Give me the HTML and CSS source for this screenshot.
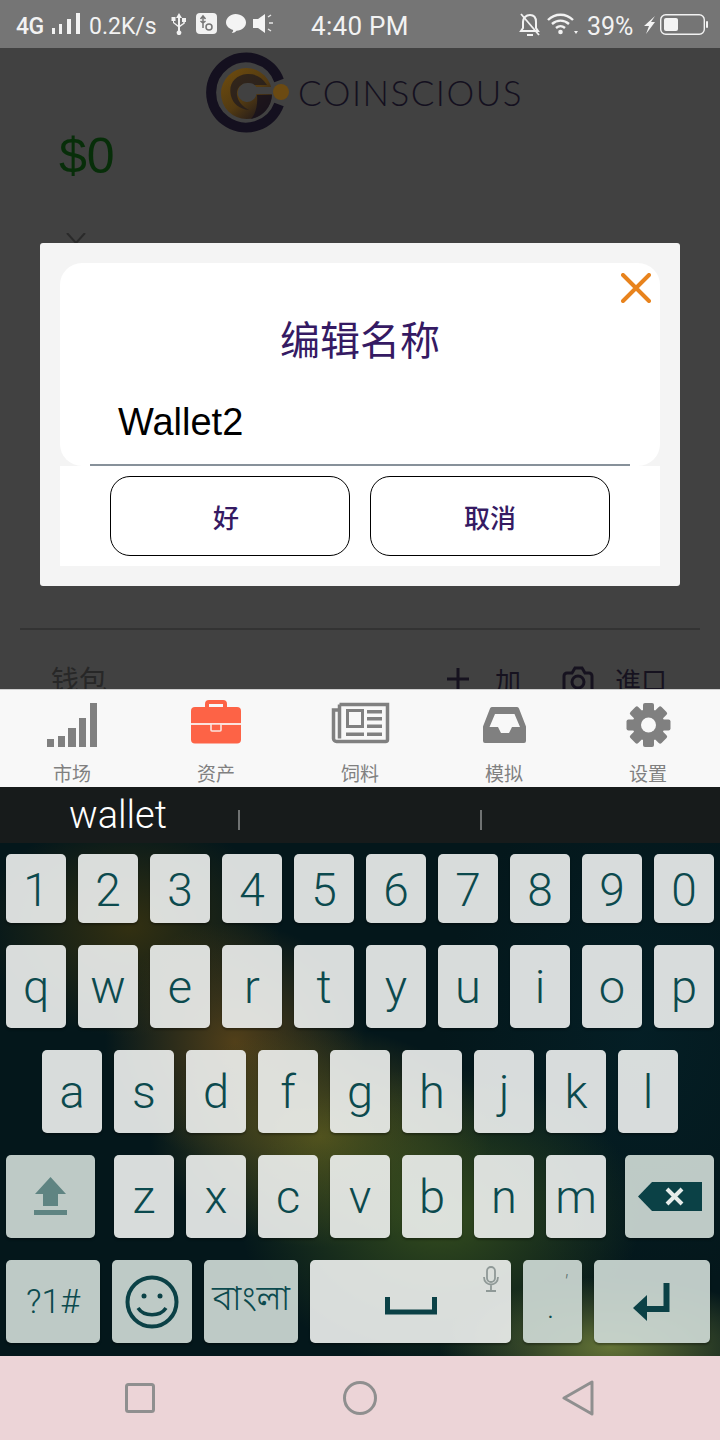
FILE: index.html
```html
<!DOCTYPE html>
<html lang="zh">
<head>
<meta charset="utf-8">
<title>Coinscious</title>
<link rel="stylesheet" href="styles.css">
</head>
<body>
<div class="screen">
  <header class="status">
    <span class="st-net">4G</span>
    <svg class="st-ic st-signal" width="30" height="48" viewBox="51 0 30 48"><path d="M52 28h3v6h-3zM59 24h3v10h-3zM67 19h4v15h-4zM76 13h4v21h-4z" fill="#f2f2f2"/></svg>
    <span class="st-speed">0.2K/s</span>
    <svg class="st-usb" width="18" height="48" viewBox="169 0 18 48"><path d="M178 13l3 5h-2v12.500a2.400 2.400 0 1 1-2 0V27l-5-4v-2h-1.500v-4h4v4H173v1.200l4 3V18h-2z M181 18h4v4h-1.200v1.500L179 27v-1.800l3.300-2.200V22H181z" fill="#f2f2f2"/></svg>
    <svg class="st-box" width="22" height="48" viewBox="195 0 22 48"><rect x="195" y="13" width="21" height="21" rx="4" fill="#f2f2f2"/><path d="M202 16v12M199.500 19l2.500-3 2.500 3M199.500 21l2.500 2 2.500-2" stroke="#757575" stroke-width="1.500" fill="none"/><circle cx="208" cy="27" r="3" stroke="#757575" stroke-width="1.500" fill="none"/></svg>
    <svg class="st-chat" width="22" height="48" viewBox="224 0 22 48"><path d="M234.500 14c5.800 0 10.500 3.700 10.500 8.500 0 4.600-4.200 8.100-9.500 8.300-1.300 1.400-3 2.200-4.800 2.200 .9-.9 1.400-2 1.500-3.100-4-1-7.200-3.900-7.200-7.400 0-4.800 4.700-8.500 9.500-8.500z" fill="#f4f4f4"/></svg>
    <svg class="st-spk" width="22" height="48" viewBox="252 0 22 48"><path d="M252 19h5l7-5v19l-7-5h-5z" fill="#f4f4f4"/><path d="M267 17l3-2M268 23h4M267 29l3 2" stroke="#e6e6e6" stroke-width="1.500"/></svg>
    <span class="st-time">4:40 PM</span>
    <div class="st-right">
      <svg width="22" height="48" viewBox="520 0 22 48"><path d="M531 15c4 0 6 3 6 7v6l2 3h-17l2-3v-6c0-4 3-7 7-7z" fill="none" stroke="#f2f2f2" stroke-width="2"/><path d="M522 14l18 21" stroke="#f2f2f2" stroke-width="1.800"/><path d="M528 34h6v2h-6z" fill="#f2f2f2"/></svg>
      <svg class="st-wifi" width="31" height="48" viewBox="548 0 31 48"><path d="M549 20c7-7 18-7 25 0M553 24c5-4.500 12-4.500 17 0M557 28c3-2.500 6-2.500 9 0" fill="none" stroke="#f2f2f2" stroke-width="2.400"/><circle cx="561.500" cy="32" r="2.300" fill="#f2f2f2"/><path d="M575 31h4l-2 3z" fill="#f2f2f2"/></svg>
      <span class="st-pct">39%</span>
      <svg class="st-bolt" width="13" height="48" viewBox="644 0 13 48"><path d="M656 16l-11 10h5l-3 8 9-12h-4z" fill="#f4f4f4"/></svg>
      <svg class="st-bat" width="48" height="48" viewBox="660 0 48 48"><rect x="660.700" y="14.700" width="43.600" height="19.600" rx="5" fill="none" stroke="#f2f2f2" stroke-width="1.400"/><rect x="664" y="18" width="14" height="13" rx="2" fill="#f4f4f4"/><rect x="706" y="21" width="2" height="7" rx="1" fill="#f2f2f2"/></svg>
    </div>
  </header>

  <main class="app">
    <div class="brand">
      <svg class="brand-mark" width="84" height="82" viewBox="205 52 84 82">
        <defs>
          <linearGradient id="gold" x1="0.1" y1="0" x2="0.9" y2="1">
            <stop offset="0" stop-color="#6e4c0e"/>
            <stop offset=".55" stop-color="#523a12"/>
            <stop offset="1" stop-color="#17121c"/>
          </linearGradient>
        </defs>
        <path d="M279 80.500A35 35 0 1 0 279 104.500" fill="none" stroke="#14101f" stroke-width="10"/>
        <circle cx="246.500" cy="93.500" r="25.500" fill="url(#gold)"/>
        <path d="M231 96c-3-12 4-21 16-22 8-.5 15 3 20 11h-16c-8-4-15 2-14 10 1 7 6 12 12 15-9-1-16-6-18-14z" fill="#1d1820" opacity=".7"/>
        <path d="M247.500 83a9.500 9.500 0 0 1 9 4H272v7h-15.500a9.500 9.500 0 1 1-9-11z" fill="#414141"/>
        <path d="M257 95h15a25.500 25.500 0 0 1-21 24c5-5 7-15 6-24z" fill="#17121c" opacity=".85"/>
        <circle cx="281" cy="92" r="8" fill="#6b4a12"/>
      </svg>
      <span class="brand-name">COINSCIOUS</span>
    </div>
    <div class="balance">$0</div>
    <svg class="chev" width="20" height="12" viewBox="0 0 20 12"><path d="M1 0l9 10 9-10" fill="none" stroke="#2a2a2a" stroke-width="2"/></svg>
    <div class="rule"></div>
    <div class="wallets">
      <span class="w-title">钱包</span>
      <svg class="w-plus" width="22" height="22" viewBox="0 0 22 22"><path d="M0 11h22M11 0v22" stroke="#16121f" stroke-width="3"/></svg>
      <span class="w-act w-add">加</span>
      <svg class="w-cam" width="32" height="28" viewBox="0 0 32 28"><path d="M2 27V11a3 3 0 0 1 3-3h5l3-5h7l3 5h4a3 3 0 0 1 3 3v16" fill="none" stroke="#16121f" stroke-width="3"/><circle cx="16" cy="17" r="6" fill="none" stroke="#16121f" stroke-width="3"/></svg>
      <span class="w-act w-imp">進口</span>
    </div>

    <section class="dialog">
      <div class="dialog-top">
        <svg class="close" width="30" height="30" viewBox="0 0 30 30"><path d="M2 2l26 26M28 2L2 28" stroke="#e8831d" stroke-width="4" stroke-linecap="round"/></svg>
        <h2 class="dialog-title">编辑名称</h2>
        <div class="dialog-input">Wallet2</div>
      </div>
      <div class="dialog-actions">
        <button class="btn btn-ok">好</button>
        <button class="btn">取消</button>
      </div>
    </section>
  </main>

  <nav class="tabs">
    <div class="tab">
      <svg width="80" height="58" viewBox="32 690 80 58"><path d="M47 739h7v8h-7zM58 736h7v11h-7zM68 728h8v19h-8zM79 718h7v29h-7zM90 703h7v44h-7z" fill="#808080"/></svg>
      <span class="tab-label">市场</span>
    </div>
    <div class="tab">
      <svg width="80" height="58" viewBox="176 690 80 58"><rect x="191" y="707" width="50" height="36.500" rx="4" fill="#fd6346"/><path d="M207 708v-4a2 2 0 0 1 2-2h14a2 2 0 0 1 2 2v4" fill="none" stroke="#fd6346" stroke-width="4"/><path d="M191 724h50" stroke="#fbe3dd" stroke-width="2"/><rect x="211" y="724" width="10" height="7" rx="1" fill="#fd6346" stroke="#fbe3dd" stroke-width="1.600"/></svg>
      <span class="tab-label">资产</span>
    </div>
    <div class="tab">
      <svg width="80" height="58" viewBox="320 690 80 58"><path d="M339.500 704.500h48v35a2 2 0 0 1-2 2h-49a3 3 0 0 1-3-3v-28.500h6M339.500 704.500v34" fill="none" stroke="#808080" stroke-width="3.500"/><rect x="347.500" y="710.500" width="15" height="16" fill="none" stroke="#808080" stroke-width="3"/><path d="M367 710h15v3.500h-15zM367 717h15v3.500h-15zM367 724.500h15v3.500h-15zM346 732.500h18v3.500h-18zM367 732.500h15v3.500h-15z" fill="#808080"/></svg>
      <span class="tab-label">饲料</span>
    </div>
    <div class="tab">
      <svg width="80" height="58" viewBox="464 690 80 58"><path fill-rule="evenodd" d="M493 707h24a2 2 0 0 1 2 1.500l7 18V741a2 2 0 0 1-2 2h-39a2 2 0 0 1-2-2v-14.500l7-18a2 2 0 0 1 2-1.500zM495 714l-5.500 13h8.500l3 6h8l3-6h8l-5.500-13z" fill="#808080"/></svg>
      <span class="tab-label">模拟</span>
    </div>
    <div class="tab">
      <svg width="80" height="58" viewBox="608 690 80 58"><g fill="#808080"><circle cx="648.500" cy="725" r="16"/><rect x="643" y="703" width="11" height="44" rx="2"/><rect x="643" y="703" width="11" height="44" rx="2" transform="rotate(45 648.500 725)"/><rect x="643" y="703" width="11" height="44" rx="2" transform="rotate(90 648.500 725)"/><rect x="643" y="703" width="11" height="44" rx="2" transform="rotate(135 648.500 725)"/></g><circle cx="648.500" cy="725" r="7.500" fill="#f8f8f8"/></svg>
      <span class="tab-label">设置</span>
    </div>
  </nav>

  <section class="keyboard">
    <div class="suggest">
      <span class="sug-word">wallet</span>
      <i class="sug-sep sep-a"></i>
      <i class="sug-sep sep-b"></i>
    </div>
    <div class="keys">
      <div class="row row-num">
        <span class="key">1</span><span class="key">2</span><span class="key">3</span><span class="key">4</span><span class="key">5</span><span class="key">6</span><span class="key">7</span><span class="key">8</span><span class="key">9</span><span class="key">0</span>
      </div>
      <div class="row">
        <span class="key">q</span><span class="key">w</span><span class="key">e</span><span class="key">r</span><span class="key">t</span><span class="key">y</span><span class="key">u</span><span class="key">i</span><span class="key">o</span><span class="key">p</span>
      </div>
      <div class="row">
        <span class="key">a</span><span class="key">s</span><span class="key">d</span><span class="key">f</span><span class="key">g</span><span class="key">h</span><span class="key">j</span><span class="key">k</span><span class="key">l</span>
      </div>
      <div class="row">
        <span class="key fn k-shift"><svg width="33" height="39" viewBox="0 0 33 39"><path d="M16.500 0L32 17h-8v12H9V17H1z" fill="#5f8482"/><path d="M0 33h33v5H0z" fill="#5f8482"/></svg></span>
        <span class="key">z</span><span class="key">x</span><span class="key">c</span><span class="key">v</span><span class="key">b</span><span class="key">n</span><span class="key">m</span>
        <span class="key fn k-back"><svg width="64" height="30" viewBox="0 0 64 30"><path d="M14 0h50v29H14L0 14.500z" fill="#0b4146"/><path d="M29 7l15 15M44 7L29 22" stroke="#e6ecea" stroke-width="4"/></svg></span>
      </div>
      <div class="row row-last">
        <span class="key fn k-sym">?1#</span>
        <span class="key fn k-emoji"><svg width="54" height="54" viewBox="0 0 54 54"><circle cx="27" cy="27" r="24.500" fill="none" stroke="#0b4146" stroke-width="4"/><circle cx="19" cy="21" r="2.500" fill="#0b4146"/><circle cx="35" cy="21" r="2.500" fill="#0b4146"/><path d="M13 33c6 9 22 9 28 0" fill="none" stroke="#0b4146" stroke-width="3.500"/></svg></span>
        <span class="key fn k-lang">বাংলা</span>
        <span class="key k-space">
          <svg width="52" height="18" viewBox="0 0 52 18"><path d="M2.500 0v15h47V0" fill="none" stroke="#0b4146" stroke-width="5"/></svg>
          <svg class="mic" width="16" height="26" viewBox="0 0 16 26"><rect x="4" y="1" width="8" height="15" rx="4" fill="none" stroke="#8f9997" stroke-width="1.800"/><path d="M1 11c0 10 14 10 14 0M8 18v6M3 25h10" fill="none" stroke="#8f9997" stroke-width="1.800"/></svg>
        </span>
        <span class="key fn k-dot"><i class="apos">'</i><i class="dot">.</i></span>
        <span class="key fn k-enter"><svg width="38" height="38" viewBox="0 0 38 38"><path d="M33.500 0v26H12" fill="none" stroke="#0b4146" stroke-width="6"/><path d="M0 25l14-13v26z" fill="#0b4146"/></svg></span>
      </div>
    </div>
  </section>

  <footer class="navbar">
    <svg width="30" height="30" viewBox="0 0 30 30"><rect x="1.500" y="1.500" width="27" height="27" rx="2" fill="none" stroke="#8f8f8f" stroke-width="3"/></svg>
    <svg class="nav-home" width="34" height="34" viewBox="0 0 34 34"><circle cx="17" cy="17" r="15.500" fill="none" stroke="#8f8f8f" stroke-width="3"/></svg>
    <svg width="32" height="36" viewBox="0 0 32 36"><path d="M30 2v32L2 18z" fill="none" stroke="#8f8f8f" stroke-width="3" stroke-linejoin="round"/></svg>
  </footer>
</div>
</body>
</html>
```

FILE: styles.css
```css
* { box-sizing: border-box; }
html, body { margin: 0; padding: 0; }
body { width: 720px; height: 1440px; overflow: hidden; font-family: "Liberation Sans", "Noto Sans CJK SC", sans-serif; }
.screen { width: 720px; height: 1440px; display: flex; flex-direction: column; }

/* status bar */
.status { height: 48px; flex: none; background: #757575; color: #f2f2f2; display: flex; align-items: center; padding-left: 16px; font-family: Roboto, "Liberation Sans", sans-serif; font-size: 23px; }
.status svg { display: block; flex: none; }
.status span { padding-top: 4px; }
.st-net { width: 35px; font-size: 23px; font-weight: 500; letter-spacing: -.5px; }
.st-speed { width: 81px; margin-left: 8px; }
.st-box { margin-left: 8px; }
.st-chat { margin-left: 7px; }
.st-spk { margin-left: 6px; }
.st-time { margin-left: 36px; font-size: 26px; letter-spacing: .3px; }
.st-right { margin-left: auto; padding-right: 12px; display: flex; align-items: center; }
.st-wifi { margin-left: 6px; }
.st-pct { margin-left: 9px; width: 56px; font-size: 25px; }
.st-bat { margin-left: 4px; }

/* app */
.app { position: relative; height: 641px; flex: none; background: #414141; overflow: hidden; }
.brand { height: 84px; display: flex; align-items: flex-start; padding: 4px 0 0 205px; }
.brand-mark { flex: none; }
.brand-name { margin: 20px 0 0 9px; font-family: Lato, "Liberation Sans", sans-serif; font-weight: 300; font-size: 35px; line-height: 40px; color: #14101f; letter-spacing: 1.500px; white-space: nowrap; }
.balance { margin-left: 59px; font-family: "Liberation Sans", sans-serif; font-size: 50px; line-height: 48px; color: #072e09; }
.chev { display: block; margin: 53px 0 0 66px; }
.rule { height: 2px; margin: 383px 20px 0; background: #333; }
.wallets { display: flex; align-items: center; height: 40px; margin-top: 29px; padding: 0 53px 0 51px; font-size: 28px; color: #16121f; }
.w-title { margin-right: auto; color: #272727; }
.w-act { font-size: 26px; }
.w-add { margin-left: 26px; }
.w-cam { margin-left: 41px; }
.w-imp { margin-left: 21px; }

/* dialog */
.dialog { position: absolute; left: 40px; top: 195px; width: 640px; height: 343px; padding: 20px; background: #f4f4f4; border-radius: 3px; }
.dialog-top { position: relative; height: 203px; background: #fff; border-radius: 22px; }
.close { position: absolute; right: 9px; top: 10px; }
.dialog-title { margin: 0; padding-top: 50px; font-size: 40px; line-height: 56px; font-weight: 400; text-align: center; color: #351a63; }
.dialog-input { position: absolute; left: 30px; right: 30px; bottom: 0; height: 67px; padding-left: 28px; border-bottom: 2px solid #87919a; font-size: 38px; line-height: 46px; color: #000; }
.dialog-actions { height: 100px; background: #fff; display: flex; gap: 20px; justify-content: center; padding-top: 10px; }
.btn { width: 240px; height: 80px; border: 1.500px solid #000; border-radius: 20px; background: #fff; color: #351a63; font-family: "Noto Sans CJK SC", sans-serif; font-size: 26px; font-weight: 500; padding: 0; }
.btn-ok { padding-right: 8px; }

/* tabs */
.tabs { height: 98px; flex: none; background: #f8f8f8; border-top: 1px solid #cfcfcf; display: flex; }
.tab { width: 144px; display: flex; flex-direction: column; align-items: center; }
.tab svg { display: block; flex: none; }
.tab-label { padding-top: 16px; font-size: 19px; line-height: 22px; color: #808080; }

/* keyboard */
.keyboard { height: 569px; flex: none; background-color: #04171b;
  background-image:
    radial-gradient(ellipse 170px 70px at 610px 560px, rgba(105,120,55,.95), rgba(105,120,55,0)),
    radial-gradient(ellipse 200px 150px at 440px 430px, rgba(60,85,30,.85), rgba(60,85,30,0)),
    radial-gradient(ellipse 170px 110px at 320px 350px, rgba(90,85,30,.95), rgba(90,85,30,0)),
    radial-gradient(ellipse 130px 120px at 235px 255px, rgba(90,68,25,.9), rgba(90,68,25,0)),
    radial-gradient(ellipse 150px 110px at 130px 140px, rgba(62,54,15,.8), rgba(62,54,15,0)),
    radial-gradient(ellipse 200px 260px at 640px 250px, rgba(5,40,50,.45), rgba(5,40,50,0));
}
.suggest { position: relative; height: 56px; background: #171b1b; color: #fff; }
.sug-word { position: absolute; left: 69px; top: 6px; font-size: 38px; line-height: 44px; font-family: Roboto, "Liberation Sans", sans-serif; font-weight: 300; }
.sug-sep { position: absolute; top: 23px; width: 2px; height: 20px; background: #6f7272; }
.sep-a { left: 238px; }
.sep-b { left: 480px; }
.keys { display: flex; flex-direction: column; gap: 22px; padding-top: 11px; }
.row { display: flex; justify-content: center; gap: 12px; height: 83px; }
.row-num { height: 69px; }
.row-last { padding-right: 4px; }
.key { position: relative; width: 60px; height: 100%; display: flex; align-items: center; justify-content: center; border-radius: 5px; background: rgba(240,242,241,.9); box-shadow: 0 2px 2px rgba(0,0,0,.3); color: #0c4a4e; font-family: Roboto, "Liberation Sans", sans-serif; font-weight: 300; font-size: 47px; line-height: 83px; }
.row-num .key { font-size: 46px; line-height: 72px; padding-top: 3px; }
.fn { background: rgba(204,216,211,.93); }
.k-shift { width: 89px; margin-right: 7px; }
.k-back { width: 89px; margin-left: 7px; }
.k-sym { width: 94px; font-size: 34px; }
.k-emoji { width: 80px; }
.k-lang { width: 94px; font-family: "Noto Sans Bengali", "Noto Sans", "DejaVu Sans", sans-serif; font-size: 35px; }
.k-space { width: 201px; padding-top: 8px; }
.k-dot { width: 59px; }
.k-enter { width: 116px; }
.mic { position: absolute; right: 12px; top: 6px; }
.apos, .dot { position: absolute; line-height: 1; }
.apos { left: 41px; top: 12px; font-size: 20px; color: #5b6f6e; font-style: italic; }
.dot { left: 24px; top: 33px; font-size: 30px; color: #0c4a4e; font-style: normal; }

/* nav */
.navbar { height: 84px; flex: 1; background: #ecd4d7; display: flex; align-items: center; padding: 0 126px 0 125px; justify-content: space-between; }
.navbar svg { display: block; }
.nav-home { margin-left: 3px; }
```
